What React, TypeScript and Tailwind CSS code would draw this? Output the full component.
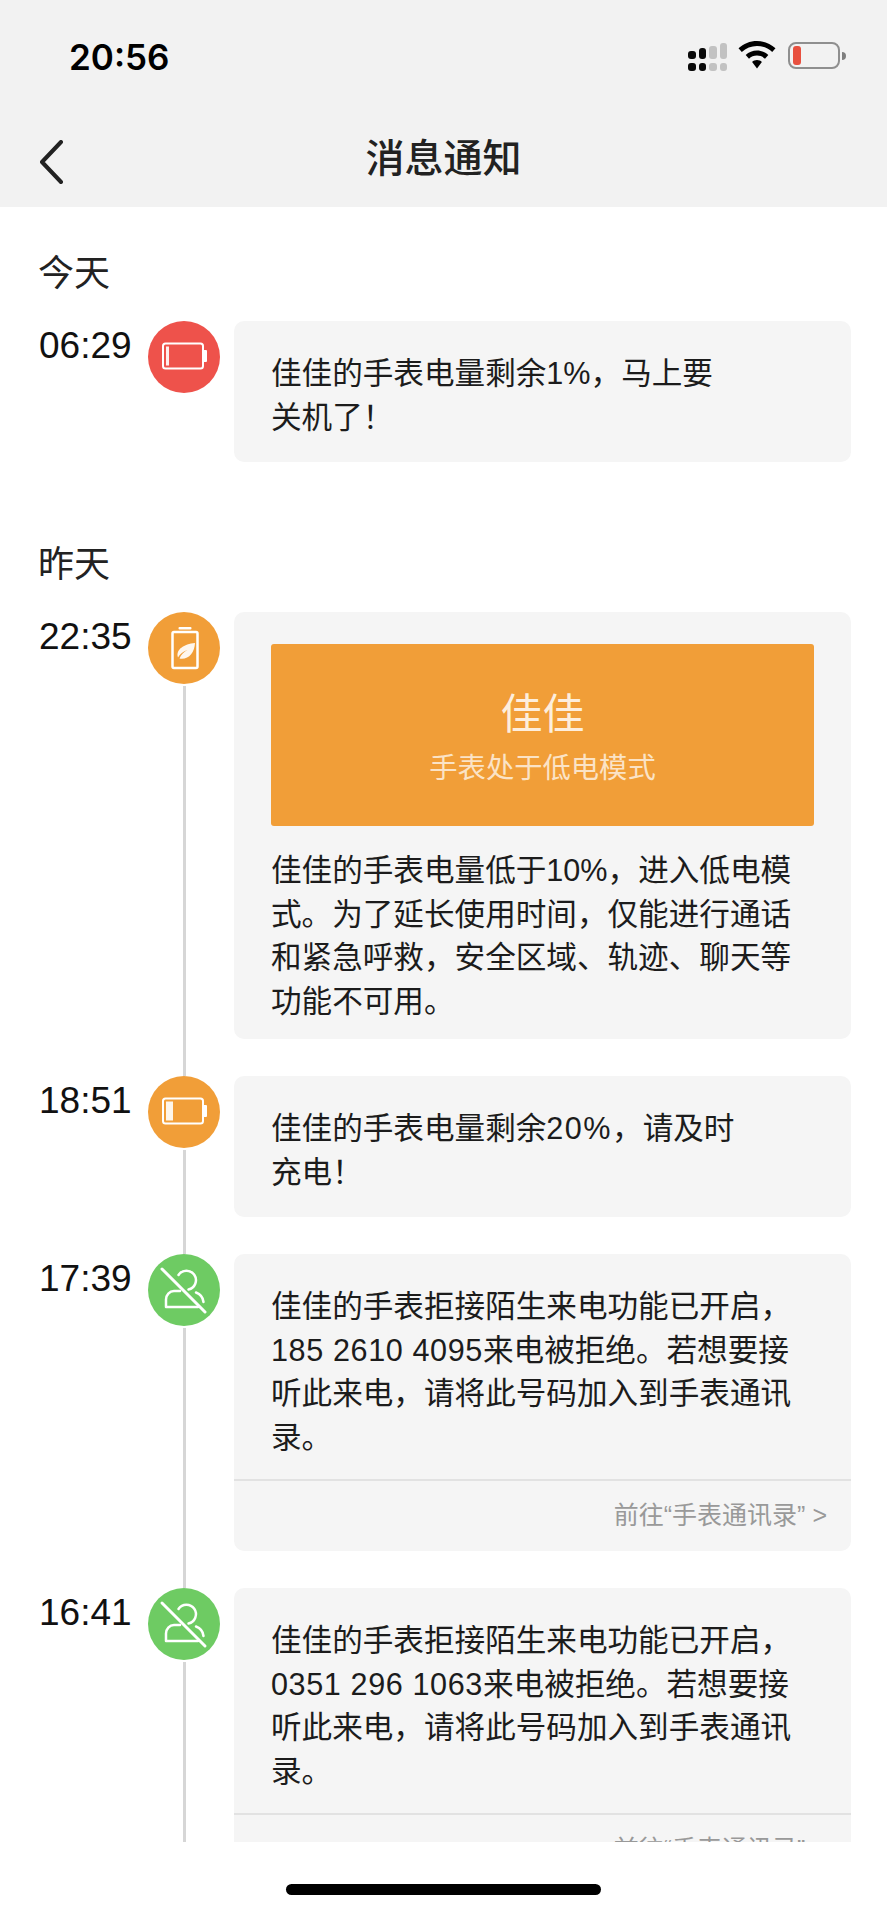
import type { ReactNode } from 'react';

const FONT = "font-['Liberation_Sans','Noto_Sans_CJK_SC',sans-serif]";

function Signal() {
  return (
    <div className="flex items-end gap-[3px] h-[16px] mr-[11px] mt-[1px]">
      {[
        ['h-[8px]', 'bg-[#0a0a0a]'],
        ['h-[11px]', 'bg-[#0a0a0a]'],
        ['h-[13px]', 'bg-[#c2c2c2]'],
        ['h-[16px]', 'bg-[#c2c2c2]'],
      ].map(([size, color], i) => (
        <div key={i} className="relative w-[7.500px]">
          <div className={`w-full rounded-[3px] ${size} ${color}`} />
          <div className={`absolute left-0 top-full w-full h-[8px] rounded-[3px] mt-[4px] ${color}`} />
        </div>
      ))}
    </div>
  );
}

function Wifi() {
  return (
    <svg className="mr-[12px] -mt-[1px]" width="38" height="28" viewBox="0 0 38 28" fill="#000">
      <path d="M19 0C12 0 5.500 2.700 0.500 7.300L3.800 11C7.900 7.200 13.200 5 19 5C24.800 5 30.100 7.200 34.200 11L37.500 7.300C32.500 2.700 26 0 19 0Z" />
      <path d="M19 9.500C14.700 9.500 10.700 11.200 7.700 14L11 17.700C13.100 15.700 15.900 14.500 19 14.500C22.100 14.500 24.900 15.700 27 17.700L30.300 14C27.300 11.200 23.300 9.500 19 9.500Z" />
      <path d="M19 19C17.100 19 15.400 19.700 14.100 20.900L19 27.500L23.900 20.900C22.600 19.700 20.900 19 19 19Z" />
    </svg>
  );
}

function StatusBattery() {
  return (
    <div className="flex items-center">
      <div className="w-[52px] h-[27px] rounded-[8px] border-2 border-[#8f8f8f] p-[2px]">
        <div className="w-[8px] h-full rounded-[3px] ml-[1px] bg-[#e8503f]" />
      </div>
      <div className="w-[4px] h-[8px] ml-[2px] rounded-r-full bg-[#7f7f7f]" />
    </div>
  );
}

function BatteryIcon({ fill }: { fill: number }) {
  return (
    <svg width="72" height="72" viewBox="0 0 72 72" fill="none">
      <rect x="15" y="22.500" width="40" height="25" rx="2.500" stroke="#fff" strokeWidth="2" />
      <rect x="18" y="25.500" width={fill} height="19" fill="#fff" fillOpacity="0.9" />
      <path d="M56 29H58A1 1 0 0 1 59 30V40A1 1 0 0 1 58 41H56Z" fill="#fff" />
    </svg>
  );
}

function LeafBatteryIcon() {
  return (
    <svg width="72" height="72" viewBox="0 0 72 72" fill="none">
      <rect x="24.500" y="20" width="25" height="36" rx="1.500" stroke="#fff" strokeWidth="2.500" />
      <rect x="30.500" y="15" width="13" height="2.500" rx="1" fill="#fff" />
      <path d="M47 31C46.500 41 40.500 48 31.500 46.500C33 42.500 36 40 39.500 38C35 39.500 32 42 30 45.500C27.500 37.500 36 32 47 31Z" fill="#fff" fillOpacity="0.92" />
    </svg>
  );
}

function NoStrangerIcon() {
  return (
    <svg width="72" height="72" viewBox="0 0 72 72" fill="none" stroke="#fff" strokeWidth="2.500" strokeLinecap="round">
      <path d="M30.500 21A9.500 9.500 0 1 1 40.500 35.500" />
      <path d="M32 37H26C21.500 37 18 41 18 45.500V53H50" strokeLinejoin="round" />
      <path d="M48 38.500C52 40 55 43.500 55.500 48" />
      <path d="M14 15L57 58" strokeWidth="3" />
    </svg>
  );
}

function Row({ time, color, icon, line = true, children }: {
  time: string;
  color: string;
  icon: ReactNode;
  line?: boolean;
  children: ReactNode;
}) {
  return (
    <div className="flex pl-[39px] pr-[36px]">
      <div className="w-[109px] shrink-0 pt-[1px] text-[37px] leading-[48px] text-[#111]">{time}</div>
      <div className="w-[72px] shrink-0 flex flex-col items-center">
        <div className={`w-[72px] h-[72px] rounded-full shrink-0 ${color}`}>{icon}</div>
        {line && <div className="w-[3px] flex-1 mt-[2px] bg-[#d6d6d6]" />}
      </div>
      <div className={`ml-[14px] flex-1 ${line ? 'pb-[37px]' : ''}`}>{children}</div>
    </div>
  );
}

function Card({ children }: { children: ReactNode }) {
  return <div className="rounded-[10px] bg-[#f5f5f5] overflow-hidden">{children}</div>;
}

function Body({ children, className = 'pt-[31px] pb-[23px]' }: { children: ReactNode; className?: string }) {
  return <p className={`px-[37px] text-[30.600px] leading-[43.500px] whitespace-nowrap text-[#1c1c1c] ${className}`}>{children}</p>;
}

function Num({ children, className = 'tracking-[0.600px]' }: { children: ReactNode; className?: string }) {
  return <span className={className}>{children}</span>;
}

function Footer() {
  return (
    <div className="border-t-2 border-[#e2e2e2] h-[72px] pr-[24px] flex items-center justify-end text-[25px] text-[#999]">
      前往“手表通讯录” &gt;
    </div>
  );
}

export default function App() {
  return (
    <div className={`w-[887px] h-[1920px] bg-white ${FONT}`}>
      <header className="h-[207px] bg-[#f2f2f2]">
        <div className="h-[113px] flex items-start pl-[69px] pr-[41px] pt-[42px]">
          <span className="font-['Inter',sans-serif] font-semibold text-[35px] leading-[30px] text-black">20:56</span>
          <div className="ml-auto flex items-start">
            <Signal />
            <Wifi />
            <StatusBattery />
          </div>
        </div>
        <div className="relative h-[94px] flex items-center justify-center -mt-[1px]">
          <svg className="absolute left-[38px] top-[28px]" width="26" height="44" viewBox="0 0 26 44" fill="none">
            <path d="M23 2L4 22L23 42" stroke="#222" strokeWidth="4" strokeLinecap="round" strokeLinejoin="round" />
          </svg>
          <h1 className="text-[39px] leading-[50px] font-medium text-[#222]">消息通知</h1>
        </div>
      </header>

      <main className="h-[1635px] overflow-hidden pt-[43px]">
        <h2 className="pl-[38px] mb-[23px] text-[36px] leading-[48px] text-[#222]">今天</h2>
        <Row time="06:29" color="bg-[#ee524b]" icon={<BatteryIcon fill={3} />} line={false}>
          <Card>
            <Body>佳佳的手表电量剩余1%，马上要<br />关机了！</Body>
          </Card>
        </Row>

        <h2 className="pl-[38px] mt-[79px] mb-[23px] text-[36px] leading-[48px] text-[#222]">昨天</h2>
        <Row time="22:35" color="bg-[#f19e38]" icon={<LeafBatteryIcon />}>
          <Card>
            <div className="mx-[37px] mt-[32px] h-[182px] rounded-[3px] bg-[#f19e38] flex flex-col items-center text-center">
              <div className="mt-[46px] text-[42px] leading-[50px] text-[#fdeedd]">佳佳</div>
              <div className="mt-[8px] text-[28.300px] leading-[40px] text-[#fbe3c6]">手表处于低电模式</div>
            </div>
            <Body className="pt-[23px] pb-[16px]">
              佳佳的手表电量低于10%，进入低电模<br />
              式。为了延长使用时间，仅能进行通话<br />
              和紧急呼救，安全区域、轨迹、聊天等<br />
              功能不可用。
            </Body>
          </Card>
        </Row>
        <Row time="18:51" color="bg-[#f19e38]" icon={<BatteryIcon fill={7} />}>
          <Card>
            <Body>佳佳的手表电量剩余<Num className="tracking-[1.500px]">20%</Num>，请及时<br />充电！</Body>
          </Card>
        </Row>
        <Row time="17:39" color="bg-[#6ecb63]" icon={<NoStrangerIcon />}>
          <Card>
            <Body className="pt-[31px] pb-[20px]">
              佳佳的手表拒接陌生来电功能已开启，<br />
              <Num>185 2610 4095</Num>来电被拒绝。若想要接<br />
              听此来电，请将此号码加入到手表通讯<br />
              录。
            </Body>
            <Footer />
          </Card>
        </Row>
        <Row time="16:41" color="bg-[#6ecb63]" icon={<NoStrangerIcon />}>
          <Card>
            <Body className="pt-[31px] pb-[20px]">
              佳佳的手表拒接陌生来电功能已开启，<br />
              <Num>0351 296 1063</Num>来电被拒绝。若想要接<br />
              听此来电，请将此号码加入到手表通讯<br />
              录。
            </Body>
            <Footer />
          </Card>
        </Row>
      </main>

      <div className="h-[78px] flex justify-center pt-[42px]">
        <div className="w-[315px] h-[11px] rounded-full bg-black" />
      </div>
    </div>
  );
}
